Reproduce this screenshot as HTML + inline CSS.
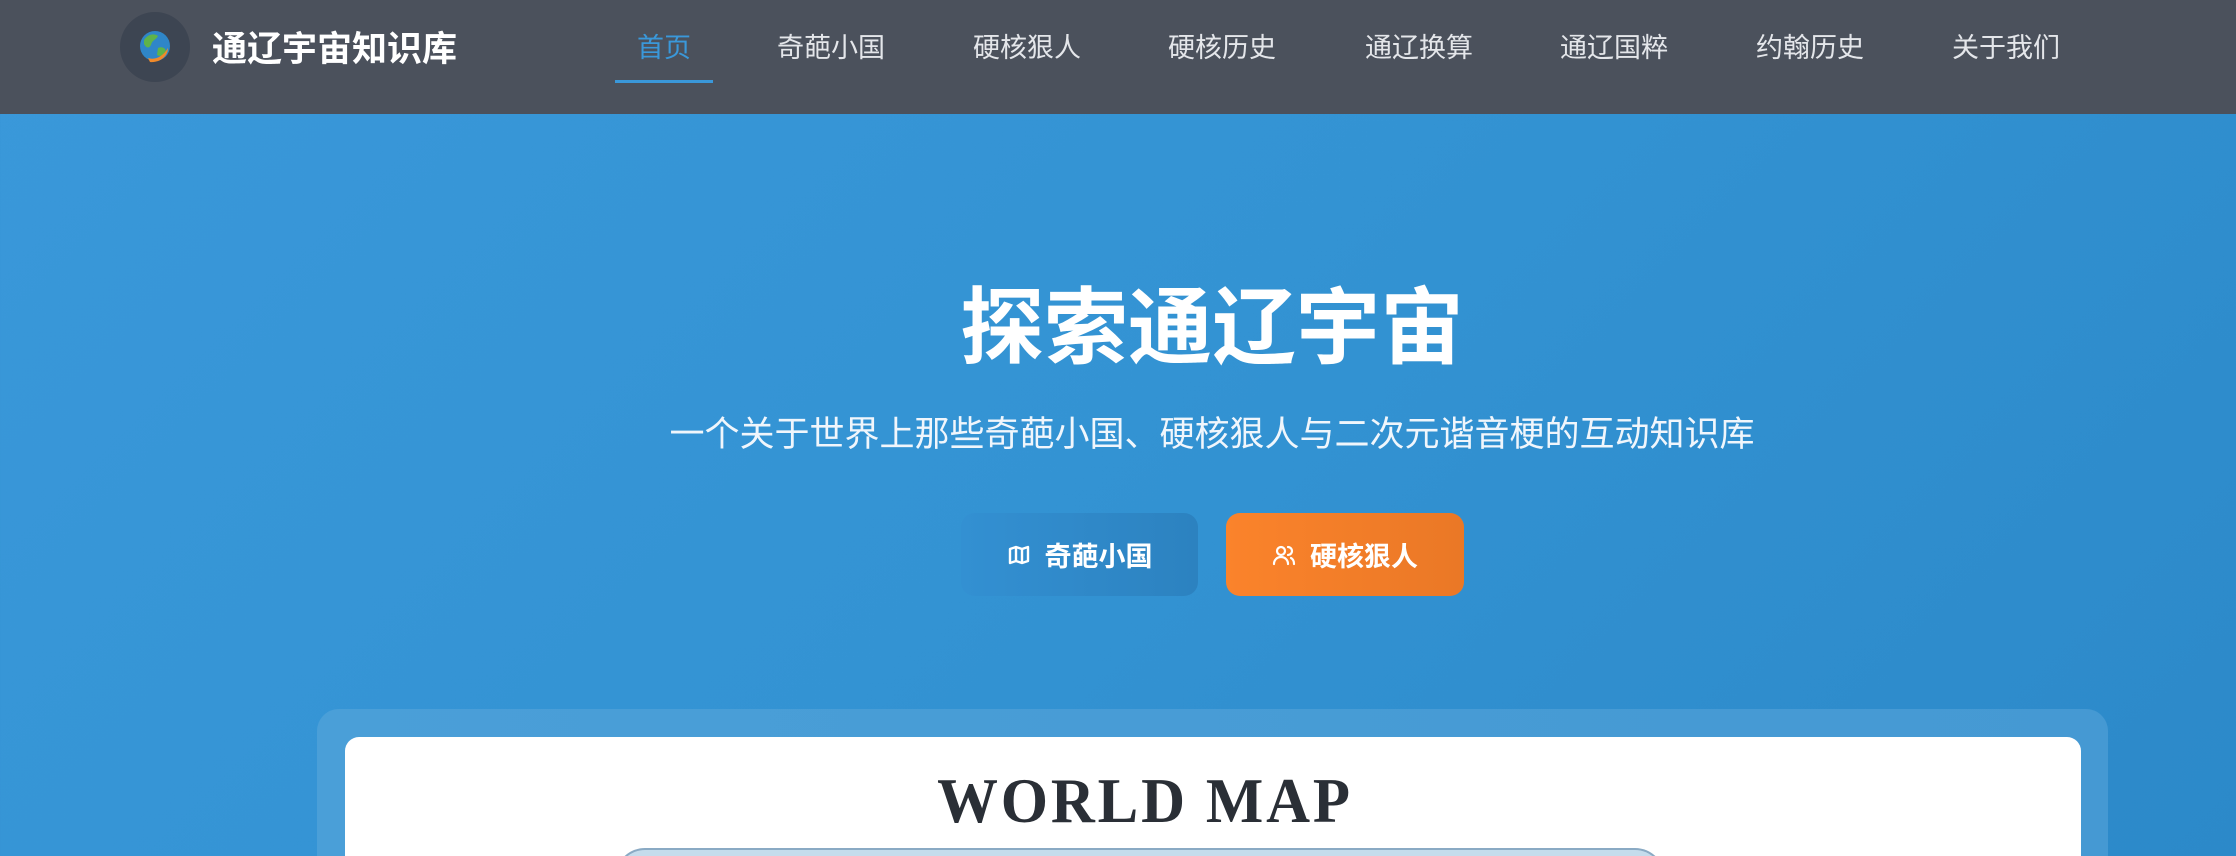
<!DOCTYPE html>
<html><head><meta charset="utf-8"><style>
*{margin:0;padding:0;box-sizing:border-box}
html{width:2236px;height:856px;overflow:hidden}
body{width:2236px;height:856px;overflow:hidden;font-family:"Liberation Sans","Noto Sans CJK SC",sans-serif;background:linear-gradient(135deg,#3a98da 0%,#3393d3 50%,#2c89c9 100%);position:relative}
nav{position:absolute;left:0;top:0;width:2236px;height:114px;background:#4b515c}
.logo{position:absolute;left:120px;top:12px;width:70px;height:70px;border-radius:50%;background:#3d4552}
.title{position:absolute;left:212px;top:28px;color:#fff;font-size:35px;font-weight:bold;line-height:44px}
.nav a{position:absolute;top:30px;color:#e4e6ea;font-size:27px;line-height:36px;transform:translateX(-50%);white-space:nowrap}
.nav a.act{color:#3a98da}
.ul{position:absolute;left:615px;top:80px;width:98px;height:3px;background:#3a98da}
h1{position:absolute;left:0;width:2424px;top:278px;text-align:center;color:#fff;font-size:84px;font-weight:bold;line-height:100px}
.sub{position:absolute;left:0;width:2424px;top:412px;text-align:center;color:#f0f6fc;font-size:35px;line-height:46px}
.btn{position:absolute;top:513px;height:83px;border-radius:14px;color:#fff;font-size:27px;font-weight:bold;display:flex;align-items:center;justify-content:center;gap:14px}
.b1{left:961px;width:237px;background:linear-gradient(90deg,#3390d2,#2c82c0)}
.b2{left:1226px;width:238px;background:linear-gradient(90deg,#fb832b,#ea7826)}
.card{position:absolute;left:317px;top:709px;width:1791px;height:147px;border-radius:22px 22px 0 0;background:linear-gradient(90deg,#4a9fd8,#4599d3)}
.white{position:absolute;left:345px;top:737px;width:1736px;height:119px;border-radius:14px 14px 0 0;background:#fff;overflow:hidden}
</style></head><body>
<nav>
<div class="logo"><svg width="70" height="70" viewBox="0 0 70 70"><circle cx="35" cy="34" r="15" fill="#2f86c8"/><path d="M24 28c4-6 10-7 14-4-2 4-6 4-7 9-2 4-5 3-7-1z" fill="#5fb34a"/><path d="M38 36c4-2 8 0 8 4-2 4-6 5-9 3z" fill="#5fb34a"/><path d="M28 46c6 2 14 0 20-10 0 8-8 15-18 14z" fill="#f08a2a"/></svg></div>
<div class="title">通辽宇宙知识库</div>
<div class="nav">
<a class="act" style="left:664px">首页</a>
<a style="left:831px">奇葩小国</a>
<a style="left:1027px">硬核狠人</a>
<a style="left:1222px">硬核历史</a>
<a style="left:1419px">通辽换算</a>
<a style="left:1614px">通辽国粹</a>
<a style="left:1810px">约翰历史</a>
<a style="left:2006px">关于我们</a>
</div>
<div class="ul"></div>
</nav>
<h1>探索通辽宇宙</h1>
<div class="sub">一个关于世界上那些奇葩小国、硬核狠人与二次元谐音梗的互动知识库</div>
<div class="btn b1"><svg width="24" height="24" viewBox="0 0 24 24" fill="none" stroke="#fff" stroke-width="2.4" stroke-linejoin="round"><path d="M3 6l6-2 6 2 6-2v14l-6 2-6-2-6 2z M9 4v14 M15 6v14"/></svg>奇葩小国</div>
<div class="btn b2"><svg width="24" height="24" viewBox="0 0 24 24" fill="none" stroke="#fff" stroke-width="2.2" stroke-linecap="round"><circle cx="9" cy="8" r="4"/><path d="M2 21c0-4 3-7 7-7s7 3 7 7M16 4a4 4 0 0 1 0 8M19 15c2 1 3 3 3 6"/></svg>硬核狠人</div>
<div class="card"></div>
<div class="white">
<div style="position:absolute;left:0;width:1600px;top:29px;text-align:center;font-family:'Liberation Serif',serif;font-weight:bold;font-size:64px;color:#2a2f36;letter-spacing:3px;line-height:70px;transform:scaleX(0.95)">WORLD MAP</div>
<div style="position:absolute;left:270px;top:111px;width:1050px;height:30px;border-radius:30px 30px 0 0;background:#c5dcec;border:2px solid #8aaac4"></div>
</div>
</body></html>
